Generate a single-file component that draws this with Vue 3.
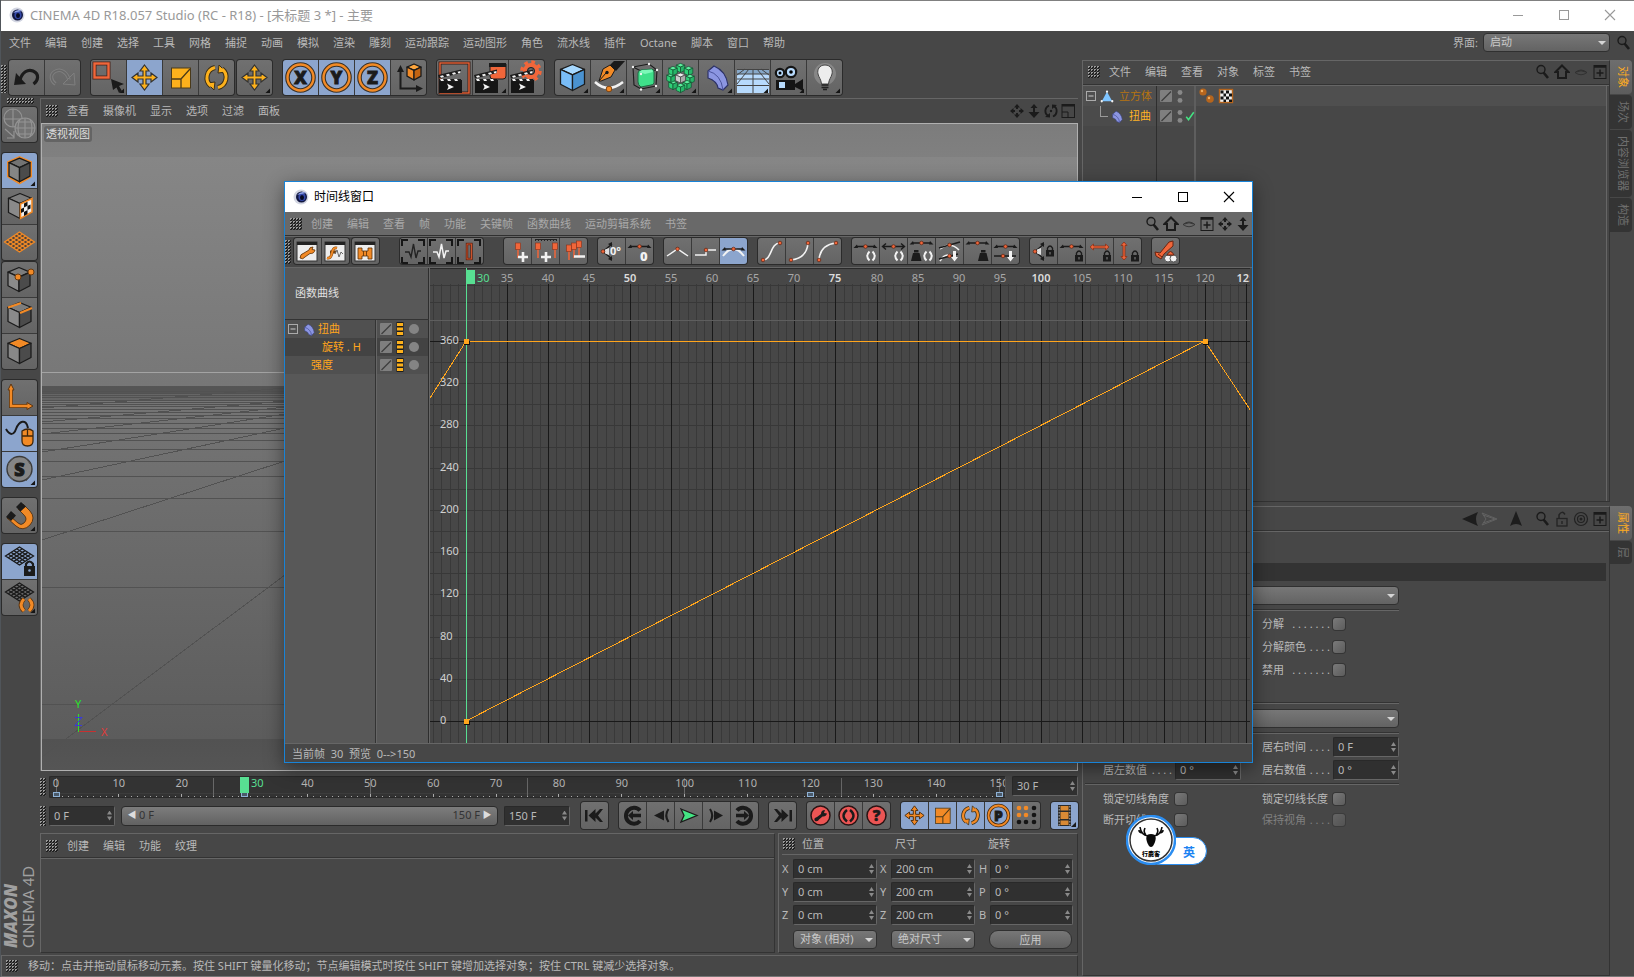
<script setup>
import { h, ref } from 'vue'

const K = '#1b1b1b'
const O = '#f28a26'
const Y = '#fdb11c'
const R = '#f0663a'
const W = '#f2f2f2'

const cube = (cx, cy, w, hh, top, left, right, stroke = K, sw = 1.3) => {
  const a = cy - hh * 0.62
  const b = cy + hh * 0.52
  const m = cy - hh * 0.2
  return `<g stroke="${stroke}" stroke-width="${sw}" stroke-linejoin="round"><path d="M${cx} ${cy - hh}L${cx + w} ${a}L${cx} ${m}L${cx - w} ${a}Z" fill="${top}"/><path d="M${cx - w} ${a}L${cx} ${m}V${cy + hh}L${cx - w} ${b}Z" fill="${left}"/><path d="M${cx + w} ${a}L${cx} ${m}V${cy + hh}L${cx + w} ${b}Z" fill="${right}"/></g>`
}
const more = '<path d="M33 28.500V33H28.500Z" fill="#151515"/>'
const cross = (c, s) =>
  `<path d="M17.500 5L22 11H19V16H24V13L30 17.500L24 22V19H19V24H22L17.500 30L13 24H16V19H11V22L5 17.500L11 13V16H16V11H13Z" fill="${c}" stroke="${s}" stroke-width="1.200"/>`
const scaleBox = (c) =>
  `<rect x="8.500" y="8" width="19" height="20" fill="${c}" stroke="#4a3a1a"/><path d="M8.500 19H18V28M18 19L27 9" fill="none" stroke="#4a3a1a" stroke-width="1.300"/>`
const spin = (c) =>
  `<g fill="none" stroke="#3b2f18" stroke-width="5"><path d="M16 7.500A10.500 10.500 0 0 0 12 26"/><path d="M19 27.500A10.500 10.500 0 0 0 23 9"/></g><path d="M8 23L16 22L15 30ZM27 12L19 13L20 5Z" fill="${c}" stroke="#3b2f18"/><g fill="none" stroke="${c}" stroke-width="3"><path d="M16 7.500A10.500 10.500 0 0 0 12 26"/><path d="M19 27.500A10.500 10.500 0 0 0 23 9"/></g>`
const axis = (t) =>
  `<circle cx="17.500" cy="17.500" r="13" fill="none" stroke="#3b3126" stroke-width="4.600"/><circle cx="17.500" cy="17.500" r="13" fill="none" stroke="${O}" stroke-width="2.400"/><text x="17.500" y="24" text-anchor="middle" font-family="Open Sans, Noto Sans, sans-serif" font-weight="800" font-size="18" fill="${K}" stroke="${K}" stroke-width=".8">${t}</text>`
const clap = `<path d="M2 20H25V33H2Z" fill="#161616"/><path d="M1 15L24 9.500V13L2 18.500ZM2 19H24V21.500H2Z" fill="${K}"/><path d="M3 16l3-.7 1 1.800-3 .7zM9 14.500l3-.7 1 1.800-3 .7zM15 13l3-.7 1 1.800-3 .7zM20.500 11.700l3-.7 0 2-2 .4zM3 19h3l1 2H4zM10 19h3l1 2h-3zM17 19h3l1 2h-3z" fill="${W}"/><path d="M10 23.500L17 27L10 30L11.500 27Z" fill="${W}"/>`
const gridDiamond = (c, cy = 17, hh = 10, w = 15, sw = 1.3) => {
  let s = `<path d="M17.500 ${cy - hh}L${17.5 + w} ${cy}L17.500 ${cy + hh}L${17.5 - w} ${cy}Z"/>`
  for (let i = 1; i < 5; i++) {
    const t = i / 5
    s += `<path d="M${17.5 - w * t} ${cy - hh + hh * t}L${17.5 + w - w * t} ${cy + hh * t}M${17.5 + w * t} ${cy - hh + hh * t}L${17.5 - w + w * t} ${cy + hh * t}"/>`
  }
  return `<g fill="none" stroke="${c}" stroke-width="${sw}">${s}</g>`
}
const grey = ['#7d7d7d', '#8a8a8a', '#4b4b4b']

const big = {
  undo: `<path d="M11 20C13 12 19 9 24 11C31 14 29 21 24.500 24" fill="none" stroke="${K}" stroke-width="3.200"/><path d="M5 25L7 13L17 24Z" fill="${K}"/>`,
  redo: `<g fill="none" stroke="#7f7f7f"><path d="M24 20C22 12 16 9 11 11C4 14 6 21 10.500 24" stroke-width="3.500"/><path d="M24 20C22 12 16 9 11 11C4 14 6 21 10.500 24" stroke="#686868" stroke-width="1.500"/><path d="M30 25L29 13L18 24Z"/></g>`,
  select: `<rect x="3.500" y="3.500" width="14" height="14" fill="none" stroke="#4a241a" stroke-width="4"/><rect x="3.500" y="3.500" width="14" height="14" fill="none" stroke="${R}" stroke-width="2.400"/><path d="M20 19L33 24L28 26L31 31L28 33L25.500 27.500L22 30Z" fill="${K}"/>${more}`,
  move: cross(Y, '#333'), moveMore: cross(Y, '#333') + more, scale: scaleBox(Y), rotate: spin(Y),
  x: axis('X'), y: axis('Y'), z: axis('Z'),
  world: `<path d="M9.500 10V28.500H27" fill="none" stroke="${K}" stroke-width="2"/><path d="M9.500 5L13 12H6ZM32 28.500L25 25V32Z" fill="${K}"/>${cube(23, 12, 7, 8, '#ffa63d', O, '#c26312')}`,
  render: `<rect x="3" y="3" width="29" height="30" fill="none" stroke="#3b1d14" stroke-width="3"/><rect x="3" y="3" width="29" height="30" fill="none" stroke="${R}" stroke-width="1.300"/>${clap}`,
  renderTo: `<path d="M17 4H33V16Q33 19 30 19H20Q17 19 17 16Z" fill="${R}" stroke="${K}"/><path d="M16 3H33V7H16Z" fill="${K}"/>${clap}${more}`,
  renderSet: `<circle cx="22" cy="11" r="9" fill="none" stroke="${R}" stroke-width="3.500" stroke-dasharray="3.600 3.470"/><circle cx="22" cy="11" r="6" fill="none" stroke="${R}" stroke-width="4"/><circle cx="22" cy="11" r="3.500" fill="#6a6a6a" stroke="${K}"/>${clap}`,
  prim: cube(17.5, 17.5, 12, 13, '#a6d8ff', '#79bdf8', '#4a92d0') + more,
  pen: `<path d="M8 21L12 9L19 5L24 10L20 17L10 21Z" fill="${O}" stroke="${K}"/><path d="M19 5L23 1H34L25 11Z" fill="${K}"/><path d="M8 21L15 13" stroke="${K}"/><circle cx="16" cy="12.500" r="1.700" fill="${K}"/><path d="M4 22Q17 34 32 22" fill="none" stroke="${W}" stroke-width="2.400"/><circle cx="18" cy="29" r="2.800" fill="${O}" stroke="#7b4312"/>${more}`,
  subdiv: `<g fill="none" stroke="${K}" stroke-width="1.100"><path d="M6 7L22 4L30 10L29 26L14 29L7 25ZM6 7L14 11L30 10M14 11V29"/></g><path d="M11 13Q11 11 14 10L25 9Q27 10 27 12V23Q26 25 24 25L14 27Q11 25 11 22Z" fill="#3fe08a" stroke="#1c6e44"/><path d="M12 12L15 10L25 9.500L26 12L18 14Z" fill="#7cf8b8"/><g fill="${W}"><circle cx="6" cy="7" r="1.200"/><circle cx="22" cy="4" r="1.200"/><circle cx="30" cy="10" r="1.200"/><circle cx="14" cy="14" r="1.200"/><circle cx="29" cy="26" r="1.200"/><circle cx="14" cy="29.500" r="1.200"/></g>${more}`,
  array: [[17.5, 8], [25.5, 11], [27, 19], [24, 25], [17.5, 28], [10, 25], [8, 18], [10, 11]].map(([a, b]) => cube(a, b, 4.3, 4.6, '#5ff0a0', '#2fd077', '#27b568', '#134f2f', 0.7)).join('') + cube(17.5, 18, 5, 5, '#f0f0f0', '#ccc', '#aaa', '#444', 0.7) + more,
  bend: `<path d="M9 11L15 6Q27 11 29 25L24 30L19 28Q18 21 9 18Z" fill="#8c96e2" stroke="#2d3266" stroke-width="1.200"/><path d="M9 11Q22 14 24 30M15 6" fill="none" stroke="#4b539c"/>${more}`,
  floor: `<path d="M2 9H34V33H2Z" fill="#b7dafc"/><path d="M2 9H34V14H2Z" fill="#87a8c8"/><g stroke="#444" stroke-width="1" fill="none"><path d="M2 9.500H34M2 14H34M2 19H34M2 25.500H34M18 9V33M14 9L2 24M22 9L34 24M10 9L2 15M26 9L34 15"/></g>${more}`,
  camera: `<path d="M5 20H24V30H5ZM24 24L32 19V31L24 27Z" fill="#151515"/><circle cx="9" cy="13" r="4.200" fill="#b7dafc" stroke="#151515" stroke-width="2.200"/><circle cx="20" cy="12" r="5.200" fill="#b7dafc" stroke="#151515" stroke-width="2.200"/><circle cx="9" cy="13" r="1.500"/><circle cx="20" cy="12" r="1.800"/><rect x="8" y="22" width="6" height="6" fill="#b7dafc"/>${more}`,
  bulb: `<circle cx="18" cy="14" r="11" fill="#a9a9a9" opacity=".45"/><path d="M18 5C12 5 10 10 11 14C12 18 14 19 14.500 24H21.500C22 19 24 18 25 14C26 10 24 5 18 5Z" fill="#ededed" stroke="#444"/><path d="M14.500 25H21.500M14.500 27.500H21.500M16 29.500H20" stroke="#222" stroke-width="1.700"/>${more}`,
  convert: `<g fill="none" stroke="#939393" stroke-width="1.200"><circle cx="11" cy="11" r="9"/><path d="M2 12H20M11 2V20"/><circle cx="23" cy="21" r="10" fill="#747474"/><path d="M13 21H33M15 15H31M15 27H31M23 11V31M18 12Q14 21 18 30M28 12Q32 21 28 30"/><path d="M3 22L12 30M12 24V31H5"/></g>`,
  model: `<path d="M17.500 3L30 8.500V24L17.500 31.500L5 24V8.500Z" fill="${O}"/>` + cube(17.5, 17, 10.5, 11.8, '#737373', '#858585', '#4b4b4b') + more,
  texture: cube(18, 17, 11.5, 12.5, ...grey) + `<path d="M18.500 15L30 9.500V23L18.500 29.500Z" fill="#f0f0f0" stroke="${O}" stroke-width="1.600"/><path d="M22 14.500l3.500-1.700v4l-3.500 1.700zM19 20l3-1.500v4l-3 1.600zM25.500 17l3-1.500v4l-3 1.600zM22 23l3.500-1.900v4L22 27z" fill="#111"/>`,
  plane: `<path d="M17.500 7L32.500 17L17.500 27L2.500 17Z" fill="#51443a"/>` + gridDiamond(O),
  points: cube(17, 17.5, 11, 12, ...grey) + `<circle cx="16" cy="15" r="3" fill="${O}" stroke="#6b3b10"/><circle cx="29" cy="10" r="3" fill="${O}" stroke="#6b3b10"/>`,
  edges: cube(17.5, 17, 11.5, 12.5, ...grey) + `<path d="M6 9.500L19 5M18 15L30 10" stroke="${O}" stroke-width="2.200"/>`,
  polys: cube(17.5, 17, 11.5, 12.5, O, '#888', '#4b4b4b'),
  axisMode: `<path d="M9 8V26H27" fill="none" stroke="#5b3511" stroke-width="4"/><path d="M9 4L12 10H6ZM31 26L25 22.500V29.500Z" fill="${O}" stroke="#5b3511"/><path d="M9 8V26H27" fill="none" stroke="${O}" stroke-width="2.400"/>`,
  tweak: `<path d="M4 13C8 20 12 19 14 13C17 5 24 2 26 12" fill="none" stroke="${K}" stroke-width="2"/><path d="M20 15Q26 11 31 15V25Q31 30 25.500 30Q20 30 20 25Z" fill="${O}" stroke="#40270c" stroke-width="1.300"/><path d="M20 20H31M25.500 13V20" stroke="#40270c" stroke-width="1.300"/>`,
  snapS: `<circle cx="17.500" cy="17" r="12.500" fill="#858585" stroke="#3a3a3a" stroke-width="1.400"/><path d="M6 12L12 5M28 12L24 6M7 24L12 29M29 23L24 29" stroke="#555"/><text x="17.500" y="23.500" text-anchor="middle" font-family="Open Sans, sans-serif" font-weight="800" font-size="18" fill="${K}" stroke="${K}">S</text>${more}`,
  magnet: `<path d="M9 19L16 25Q19 28 22 25Q26 21 22 17L16 11L21 6L28 13Q34 20 28 27Q21 34 14 28L5 20Z" fill="${O}" stroke="#4a2a0b" stroke-width=".8"/><path d="M4 19L9 13L14 17.500L9 23ZM14 9L19 4L24 8.500L18.500 13.500Z" fill="${K}"/>${more}`,
  gridLock: gridDiamond(K, 12, 9, 14) + `<path d="M22 22H33V32H22Z" fill="${K}"/><path d="M24 23V20Q27.500 15 31 20V23" fill="none" stroke="${K}" stroke-width="2.200"/><circle cx="27.500" cy="26.500" r="1.300" fill="#8ca5cd"/>`,
  gridSpin: gridDiamond(K, 12, 9, 14) + `<path d="M22 19Q16 25 22 31M27 19Q33 25 27 31" fill="none" stroke="#5b3511" stroke-width="4.500"/><path d="M22 19Q16 25 22 31M27 19Q33 25 27 31" fill="none" stroke="${O}" stroke-width="3"/>${more}`
}

const dot = (x, y, r = 1.8) => `<circle cx="${x}" cy="${y}" r="${r}" fill="${R}" stroke="#5d2413" stroke-width=".7"/>`
const handle = (y) => `<path d="M4 ${y}H23" stroke="${K}" stroke-width="1.400"/><path d="M1.500 ${y + 1.5}L5 ${y - 2}L6 ${y + 1.5}ZM25.500 ${y + 1.5}L22 ${y - 2}L21 ${y + 1.5}Z" fill="${K}"/>${dot(13.5, y)}`
const paren = (x) => `<path d="M${x - 1.5} 13.500Q${x - 6} 18 ${x - 1.5} 22.500M${x + 1.5} 13.500Q${x + 6} 18 ${x + 1.5} 22.500" fill="none" stroke="${W}" stroke-width="2"/>`
const lock = (x, y) => `<rect x="${x}" y="${y}" width="8" height="6.500" fill="${K}"/><path d="M${x + 1.5} ${y}V${y - 2}Q${x + 4} ${y - 6} ${x + 6.5} ${y - 2}V${y}" fill="none" stroke="${K}" stroke-width="1.400"/><rect x="${x + 3.5}" y="${y + 2}" width="1" height="2.500" fill="#888"/>`
const winBox = `<rect x="3" y="4" width="20" height="19" fill="#ededed" stroke="#333"/><rect x="3" y="4" width="20" height="3" fill="#222"/>`
const brackets = `<path d="M2 8V2H8M18 2H24V8M24 19V25H18M8 25H2V19" fill="none" stroke="#161616" stroke-width="2"/>`
const pin = (x, y = 5) => `<path d="M${x} ${y + 5}V${y + 15}" stroke="${R}" stroke-width="1.500"/><rect x="${x - 2.5}" y="${y}" width="5" height="6.500" fill="${R}" stroke="#8a3018" stroke-width=".6"/>`
const weight = (x) => `<path d="M${x} 23L${x + 2} 15H${x + 8.5}L${x + 10.5} 23ZM${x + 3} 12H${x + 7.5}V14.500H${x + 3}Z" fill="${K}"/>`
const arrowDown = `<path d="M17 13H20V19H22L18.500 23.500L15 19H17Z" fill="${W}"/>`

const small = {
  tKey: winBox + `<path d="M6 20Q6 16 10 15L15 12Q15 9 19 9L18 11.500L21 12Q20 16 16 15.500L11 19Q9 22 6 20Z" fill="${O}" stroke="#5a3008" stroke-width=".8"/>`,
  tCurve: winBox + `<path d="M5 20Q9 21 10 15Q11 9 15 10M8 14H14" fill="none" stroke="#7a430c" stroke-width="2.800"/><path d="M5 20Q9 21 10 15Q11 9 15 10" fill="none" stroke="${O}" stroke-width="1.800"/><path d="M13 16L15 12L17 19L19 14L21 16" fill="none" stroke="#666"/>`,
  tMotion: winBox + `<path d="M6 10H10V13H16V10H20V21H16V18H10V21H6Z" fill="${O}" stroke="#5a3008" stroke-width=".8"/><path d="M11.500 13V18M14.500 13V18" stroke="#5a3008" stroke-width=".8"/>`,
  pulseK: brackets + `<path d="M5 14H9L11 19L13.500 6L16 20L18 13H21" fill="none" stroke="#222" stroke-width="1.400"/>`,
  pulseW: brackets + `<path d="M5 14H9L11 19L13.500 6L16 20L18 13H21" fill="none" stroke="${W}" stroke-width="1.500"/>`,
  frameO: brackets + `<rect x="11" y="6" width="4.500" height="15" fill="none" stroke="#5c2010" stroke-width="2.400"/><rect x="11" y="6" width="4.500" height="15" fill="none" stroke="#d9592f" stroke-width=".9"/>`,
  addKey: pin(14) + `<path d="M19 14V24M14 19H24" stroke="${W}" stroke-width="2.600"/>`,
  addKeys: pin(6) + pin(23) + `<path d="M3 2H25" stroke="#222" stroke-width="2" stroke-dasharray="1 2"/><path d="M3 1.500H25" stroke="#222"/><path d="M14 14V24M9 19H19" stroke="${W}" stroke-width="2.600"/>`,
  delKeys: pin(9, 7) + pin(14, 5) + pin(19, 3) + `<path d="M14 18.500H25" stroke="${W}" stroke-width="2.600"/>`,
  zeroAngle: `<path d="M5 13.500L14 6M5 13.500L14 21" stroke="${K}" stroke-width="1.300"/><path d="M14 4V9L10 6ZM14 23V18L10 21Z" fill="${K}"/><path d="M7 11.500L11 10V17L7 15.500Z" fill="#ddd"/>${dot(5, 13.5)}<text x="12" y="17" font-family="Open Sans, sans-serif" font-weight="700" font-size="11" fill="${W}">0°</text>`,
  zeroLen: handle(8.5) + `<text x="14" y="23" font-family="Open Sans, sans-serif" font-weight="800" font-size="13" fill="${W}">0</text>`,
  linear: `<path d="M3 18L13.500 11L24 18" fill="none" stroke="${W}" stroke-width="1.500"/>${dot(13.5, 11)}`,
  step: `<path d="M3 17H14V12H24" fill="none" stroke="${W}" stroke-width="1.500"/>${dot(14, 12)}`,
  spline: `<path d="M3 18Q13.500 4 24 18" fill="none" stroke="${W}" stroke-width="2"/>${handle(11)}`,
  easeS: `<path d="M5 22C14 22 12 5 22 5" fill="none" stroke="${W}" stroke-width="1.600"/>${dot(5, 22)}${dot(22, 5)}`,
  easeIn: `<path d="M5 22Q21 20 22 5" fill="none" stroke="${W}" stroke-width="1.600"/>${dot(5, 22)}${dot(22, 5)}`,
  easeOut: `<path d="M5 22Q6 7 22 5" fill="none" stroke="${W}" stroke-width="1.600"/>${dot(5, 22)}${dot(22, 5)}`,
  hParen: handle(8.5) + paren(19),
  aParen: `<path d="M3 8.500H24M6 5.500L2.500 8.500L6 11.500M21 5.500L24.500 8.500L21 11.500" fill="none" stroke="${K}" stroke-width="1.400"/>${dot(13.5, 8.5)}${paren(19)}`,
  wParen: handle(5) + weight(3) + paren(20),
  curves: `<path d="M4 11Q14 3 23 12M4 23Q9 15 15 18" fill="none" stroke="${W}" stroke-width="1.600"/><path d="M3 10L24 4M3 21L22 16" stroke="${K}" stroke-width="1.400"/>${dot(13.5, 7)}${dot(13.5, 18)}${arrowDown}`,
  wHandle: handle(5) + weight(14),
  twoHandle: handle(8.5) + `<path d="M2 18H24" stroke="${K}" stroke-width="1.400"/>${dot(11, 18)}${arrowDown}`,
  lockAngle: `<path d="M5 13.500L14 6M5 13.500L14 21" stroke="${K}" stroke-width="1.300"/><path d="M14 4V9L10 6ZM14 23V18L10 21Z" fill="${K}"/><path d="M7 11.500L11 10V17L7 15.500Z" fill="#ddd"/>${dot(5, 13.5)}${lock(16, 12)}`,
  lockLen: handle(8.5) + lock(17, 17),
  lockTime: `<path d="M4 9L7.500 6V8H19.500V6L23 9L19.500 12V10H7.500V12Z" fill="${R}" stroke="#8a3018" stroke-width=".8"/>${lock(17, 17)}`,
  lockVal: `<path d="M10 4L13 7.500H11V18.500H13L10 22L7 18.500H9V7.500H7Z" fill="${R}" stroke="#8a3018" stroke-width=".8"/>${lock(17, 17)}`,
  keyMix: `<path d="M3 14L8 15L17 4L21 3L21 8L12 16L9 21L4 18Z" fill="${R}" stroke="#6b2511"/><path d="M6 16L10 19" stroke="#6b2511"/><circle cx="16" cy="20.500" r="3.500" fill="${W}" stroke="#555"/><circle cx="21.500" cy="20.500" r="3.500" fill="${W}" stroke="#555"/><path d="M15 17Q18.500 10 22 17Z" fill="${R}" stroke="#6b2511"/>`,
  first: `<path d="M4 8H6.500V19.500H4ZM14.500 7L7.500 13.500L14.500 20V15.500L12.500 13.500L14.500 11.500ZM22 7H19L12.500 13.500L19 20H22L17 13.500Z" fill="${K}"/>`,
  last: `<path d="M23 8H20.500V19.500H23ZM12.500 7L19.500 13.500L12.500 20V15.500L14.500 13.500L12.500 11.500ZM5 7H8L14.500 13.500L8 20H5L10 13.500Z" fill="${K}"/>`,
  prevKey: `<path d="M21 8.500A8 8 0 1 0 21 19" fill="none" stroke="${K}" stroke-width="4"/><path d="M9 13.500L14 9V11.800H22V15.200H14V18Z" fill="${K}"/>`,
  nextKey: `<path d="M6 8.500A8 8 0 1 1 6 19" fill="none" stroke="${K}" stroke-width="4"/><path d="M18 13.500L13 9V11.800H5V15.200H13V18Z" fill="${K}"/>`,
  prev: `<path d="M7 13.500L17 8.500V18.500Z" fill="${K}"/><path d="M21.500 7Q17 13.500 21.500 20" fill="none" stroke="${K}" stroke-width="2"/>`,
  play: `<path d="M6 7L22 13.500L6 20L9 13.500Z" fill="#43e583" stroke="#1b1b1b" stroke-width="1.300"/>`,
  nextFrame: `<path d="M20 13.500L11 8.500V18.500Z" fill="${K}"/><path d="M7 7Q11.500 13.500 7 20" fill="none" stroke="${K}" stroke-width="2"/>`,
  recKey: `<circle cx="13.500" cy="13.500" r="9.500" fill="#ec5554" stroke="#2a1414" stroke-width="1.500"/><path d="M8 19Q6 16 10 15L14 12Q14 8 18 8L17 11L20 11.500Q19 15 15.500 14.500L12 17.500Q11 20 8 19Z" fill="${K}"/>`,
  recAuto: `<circle cx="13.500" cy="13.500" r="9.500" fill="#ec5554" stroke="#2a1414" stroke-width="1.500"/><path d="M12 8Q5 13.500 12 19.500M15 8Q22 13.500 15 19.500" fill="none" stroke="${K}" stroke-width="2.400"/>`,
  recHelp: `<circle cx="13.500" cy="13.500" r="9.500" fill="#ec5554" stroke="#2a1414" stroke-width="1.500"/><text x="13.500" y="19" text-anchor="middle" font-family="Open Sans, sans-serif" font-weight="800" font-size="15" fill="${K}" stroke="${K}" stroke-width=".5">?</text>`,
  sMove: `<g transform="scale(.77)">${cross(O, '#4a2a0b')}</g>`,
  sScale: `<g transform="scale(.77)">${scaleBox(O)}</g>`,
  sRot: `<g transform="scale(.77)">${spin(O)}</g>`,
  sParam: `<circle cx="13.500" cy="13.500" r="10" fill="none" stroke="#4a2a0b" stroke-width="3.400"/><circle cx="13.500" cy="13.500" r="10" fill="none" stroke="${O}" stroke-width="1.800"/><text x="13.500" y="18.500" text-anchor="middle" font-family="Open Sans, sans-serif" font-weight="800" font-size="14" fill="${K}" stroke="${K}" stroke-width=".8">P</text>`,
  sPla: [6, 13, 20].map((y, j) => [6, 13, 21].map((x, i) => `<circle cx="${x}" cy="${y}" r="2.300" fill="${i < 2 && j < 2 ? O : '#151515'}"/>`).join('')).join(''),
  film: `<rect x="7" y="3" width="13" height="21" fill="#2b2b2b"/><path d="M9.500 4H17.500V8.500H9.500ZM9.500 10H17.500V17H9.500ZM9.500 18.500H17.500V23H9.500Z" fill="#d98a35"/><path d="M8.200 4V24M18.800 4V24" stroke="#9a9a9a" stroke-width="1.200" stroke-dasharray="1.500 1.500"/><path d="M25 20V25H20Z" fill="${K}"/>`
}

const tiny = {
  search: `<circle cx="6" cy="5.500" r="4" fill="none" stroke="${K}" stroke-width="1.400"/><path d="M8.500 8.500L13 14" stroke="${K}" stroke-width="2.600"/>`,
  home: `<path d="M8 1.500L14.500 8H12V14H4V8H1.500Z" fill="none" stroke="${K}" stroke-width="2"/>`,
  eye: `<path d="M2 8.500Q8 3.500 14 8.500Q8 13 2 8.500ZM3.500 8Q8 5.500 12.500 8" fill="none" stroke="#2c2c2c" stroke-width=".8"/>`,
  plus: `<rect x="2" y="1.500" width="12" height="13" fill="none" stroke="${K}" stroke-width="1"/><path d="M2 2.500H14" stroke="${K}" stroke-width="2.500"/><path d="M8 5.500V12.500M4.500 9H11.500" stroke="${K}" stroke-width="1.500"/>`,
  pan: `<path d="M8 1L11 4.500H9V6H7V4.500H5ZM8 15L5 11.500H7V10H9V11.500H11ZM1 8L4.500 5V7H6V9H4.500V11ZM15 8L11.500 11V9H10V7H11.500V5Z" fill="${K}"/>`,
  dolly: `<path d="M8 1L11.500 5H9V9H13.500L8 15L2.500 9H7V5H4.500Z" fill="${K}"/>`,
  orbit: `<path d="M6 2.500A6 6 0 0 0 5 13M10 13.500A6 6 0 0 0 11 3" fill="none" stroke="${K}" stroke-width="1.800"/><path d="M2 14L7 14.500V10ZM14 2L9 1.500V6Z" fill="${K}"/><circle cx="8" cy="8" r="1.200" fill="${K}"/>`,
  layout: `<rect x="2" y="1.500" width="12.500" height="13" fill="none" stroke="${K}" stroke-width="1"/><path d="M2 2.500H14.500" stroke="${K}" stroke-width="2"/><path d="M2 9H8V14.500" fill="none" stroke="${K}"/>`,
  back: `<path d="M0 8L16 1Q12 8 16 15Z" fill="#1d1d1d"/>`,
  fwd: `<path d="M16 8L1 2L5 8L1 14ZM2 4L14 8L2 12" fill="none" stroke="#626262"/>`,
  up: `<path d="M8 0L14 15Q8 11 2 15Z" fill="#1d1d1d"/>`,
  unlock: `<rect x="3" y="7.500" width="10" height="7.500" fill="none" stroke="#242424" stroke-width="1.300"/><path d="M5 7V4Q8-1 11 3.500" fill="none" stroke="#242424" stroke-width="1.500"/><path d="M8 10V13" stroke="#242424" stroke-width="1.400"/>`,
  target: `<circle cx="8" cy="8" r="6.500" fill="none" stroke="#222" stroke-width="1.200"/><circle cx="8" cy="8" r="3.500" fill="none" stroke="#222" stroke-width="1.200"/><circle cx="8" cy="8" r="1.500" fill="#222"/>`,
  bendS: `<path d="M3 6L7 2.500Q13 5 14 12L11 15.500L8 14.500Q7 11 3 10Z" fill="#8c96e2" stroke="#3c4380" stroke-width=".7"/><path d="M3 6Q10 8 11 15.500" fill="none" stroke="#525aa6"/>`,
  layer: `<rect x="2" y="2" width="12" height="12" rx="1" fill="#7f7f7f"/><path d="M3.500 13L13 3.500" stroke="#3e3e3e" stroke-width="1.300"/>`,
  solo: `<rect x="4.500" y="1" width="7" height="14" fill="#1d1d1d"/><path d="M5 3.500H11M5 8H11M5 12.500H11" stroke="${Y}" stroke-width="2.800"/>`,
  circle: `<circle cx="8" cy="8" r="5" fill="#848484"/>`,
  minus: `<rect x="3.500" y="3.500" width="9" height="9" fill="none" stroke="#aaa"/><path d="M5.500 8H10.500" stroke="#ccc"/>`,
  poly: `<path d="M8 3L14 14H2Z" fill="#7ec4ff"/><g fill="${W}"><circle cx="8" cy="3" r="1.300"/><circle cx="2" cy="14" r="1.300"/><circle cx="14" cy="14" r="1.300"/></g>`,
  dots: `<circle cx="8" cy="4" r="2.800" fill="#888"/><circle cx="8" cy="13" r="2.800" fill="#888"/>`,
  check: `<path d="M3 9L6 13L13 3" fill="none" stroke="#43e583" stroke-width="2"/>`,
  phong: `<circle cx="5" cy="4" r="3.600" fill="#b5651d"/><circle cx="4" cy="3" r="1.200" fill="#f2b060"/><circle cx="12" cy="11" r="3.800" fill="#b5651d"/><circle cx="11" cy="10" r="1.200" fill="#f2b060"/>`,
  uvw: `<rect x="1.500" y="1.500" width="13" height="13" fill="#eee" stroke="#b5651d" stroke-width="1.400"/><path d="M2.500 2.500h3v3h-3zM8 2.500h3v3H8zM5.500 5.500H8v3H5.500zM11 5.500h3v3h-3zM2.500 8.500h3v3h-3zM8 8.500h3v3H8zM5.500 11.500H8v2.500H5.500zM11 11.500h3v2.500h-3z" fill="#111"/>`,
  logo: `<circle cx="8" cy="8" r="7.500" fill="#d3d6e2"/><circle cx="8.500" cy="8" r="5.500" fill="#10163f"/><ellipse cx="9" cy="8" rx="3.600" ry="4" fill="#3448a8"/><ellipse cx="9" cy="8.500" rx="2" ry="2.600" fill="#070a22"/><path d="M4 6Q8 1 13.500 4L8 5Z" fill="#8fa2e6"/>`,
  min: `<path d="M3 8.500H13" stroke="currentColor"/>`,
  max: `<rect x="3.500" y="3.500" width="9" height="9" fill="none" stroke="currentColor"/>`,
  close: `<path d="M3 3L13 13M13 3L3 13" stroke="currentColor" stroke-width="1.100"/>`
}

const Icon = ({ n, s = 16 }) => {
  const src = big[n] ? [big[n], 35] : small[n] ? [small[n], 27] : [tiny[n], 16]
  const size = src[1] === 16 ? s : src[1]
  return h('svg', { viewBox: `0 0 ${src[1]} ${src[1]}`, width: size, height: size, 'aria-hidden': 'true', innerHTML: src[0] })
}
Icon.props = ['n', 's']

const menus = ['文件', '编辑', '创建', '选择', '工具', '网格', '捕捉', '动画', '模拟', '渲染', '雕刻', '运动跟踪', '运动图形', '角色', '流水线', '插件', 'Octane', '脚本', '窗口', '帮助']
const viewMenus = ['查看', '摄像机', '显示', '选项', '过滤', '面板']
const objMenus = ['文件', '编辑', '查看', '对象', '标签', '书签']
const tlMenus = ['创建', '编辑', '查看', '帧', '功能', '关键帧', '函数曲线', '运动剪辑系统', '书签']
const matMenus = ['创建', '编辑', '功能', '纹理']

const toolGroups = [
  { items: ['undo', 'redo'] },
  { items: ['select', 'move', 'scale', 'rotate'], on: ['move'] },
  { items: ['moveMore'], near: true },
  { items: ['x', 'y', 'z', 'world'], on: ['x', 'y', 'z'] },
  { items: ['render', 'renderTo', 'renderSet'] },
  { items: ['prim', 'pen', 'subdiv', 'array', 'bend', 'floor', 'camera', 'bulb'] }
]
const sideGroups = [
  { items: ['convert'] },
  { items: ['model', 'texture', 'plane'], on: ['model'] },
  { items: ['points', 'edges', 'polys'], near: true },
  { items: ['axisMode', 'tweak', 'snapS'], on: ['tweak', 'snapS'] },
  { items: ['magnet'] },
  { items: ['gridLock', 'gridSpin'], on: ['gridLock'] }
]
const tlGroups = [
  { items: ['tKey', 'tCurve'] },
  { items: ['tMotion'], gap: 'near' },
  { items: ['pulseK', 'pulseW', 'frameO'], gap: 'far' },
  { items: ['addKey', 'addKeys', 'delKeys'], gap: 'far' },
  { items: ['zeroAngle', 'zeroLen'] },
  { items: ['linear', 'step', 'spline'], on: ['spline'] },
  { items: ['easeS', 'easeIn', 'easeOut'] },
  { items: ['hParen', 'aParen', 'wParen', 'curves', 'wHandle', 'twoHandle'] },
  { items: ['lockAngle', 'lockLen', 'lockTime', 'lockVal'] },
  { items: ['keyMix'] }
]
const playGroups = [
  { items: ['first'] },
  { items: ['prevKey', 'prev', 'play', 'nextFrame', 'nextKey'] },
  { items: ['last'] },
  { items: ['recKey', 'recAuto', 'recHelp'] },
  { items: ['sMove', 'sScale', 'sRot', 'sParam', 'sPla'], on: ['sMove', 'sScale', 'sRot', 'sParam'] },
  { items: ['film'], on: ['film'] }
]

const frames = Array.from({ length: 151 }, (_, i) => i)
const pct = (f) => (f / 150) * 100 + '%'

const gx = (f) => 36 + Math.round((f - 30) * 8.21)
const gy = (v) => 453 - Math.round(v * 1.0555)
const gFrames = Array.from({ length: 100 }, (_, i) => i + 26)
const gLabels = gFrames.filter((f) => f % 5 === 0 && f > 30)
const gValues = Array.from({ length: 19 }, (_, i) => i * 20)
const keys = [[30, 360], [120, 360], [30, 0]]

const horizon = [267, 269, 271, 273, 276, 278, 280, 282, 285, 288, 291, 294, 299, 304, 309, 316, 325, 337, 352, 374, 407, 463, 580]
const coords = ref([
  [['X', '0 cm'], ['X', '200 cm'], ['H', '0 °']],
  [['Y', '0 cm'], ['Y', '200 cm'], ['P', '0 °']],
  [['Z', '0 cm'], ['Z', '200 cm'], ['B', '0 °']]
])
const start = ref('0 F')
const end = ref('150 F')
const now = ref('30 F')
const rt = ref('0 F')
const lv = ref('0 °')
const rv = ref('0 °')
const dots4 = '. . . .'
const dots7 = '. . . . . . .'
const checks = [
  { label: '分解', dots: dots7 },
  { label: '分解颜色', dots: dots4 },
  { label: '禁用', dots: dots7 }
]
const tracks = [
  { name: '扭曲', cls: 'root' },
  { name: '旋转 . H', cls: 'sub' },
  { name: '强度', cls: 'leaf' }
]
</script>

<template>
  <div class="app">
    <header class="titlebar">
      <Icon n="logo" />
      <h1>CINEMA 4D R18.057 Studio (RC - R18) - [未标题 3 *] - 主要</h1>
      <div class="winbtns">
        <button v-for="b in ['min', 'max', 'close']" :key="b" :aria-label="b"><Icon :n="b" /></button>
      </div>
    </header>

    <nav class="menubar">
      <button v-for="m in menus" :key="m">{{ m }}</button>
      <label class="iface" for="iface">界面:</label>
      <span class="select iface-sel"><select id="iface"><option>启动</option></select></span>
      <Icon n="search" />
    </nav>

    <div class="main">
      <div class="left">
        <div class="toolbar">
          <i class="grip tall"></i>
          <div v-for="(g, i) in toolGroups" :key="i" class="group" :class="{ near: g.near }">
            <button v-for="t in g.items" :key="t" class="tile" :class="{ on: g.on && g.on.includes(t) }" :aria-label="t"><Icon :n="t" /></button>
          </div>
        </div>

        <div class="work">
          <aside class="side">
            <i class="grip wide"></i>
            <div v-for="(g, i) in sideGroups" :key="i" class="group col" :class="{ near: g.near }">
              <button v-for="t in g.items" :key="t" class="tile" :class="{ on: g.on && g.on.includes(t) }" :aria-label="t"><Icon :n="t" /></button>
            </div>
            <div class="brand"><b>MAXON</b><span>CINEMA 4D</span></div>
          </aside>

          <div class="center">
            <section class="view">
              <div class="phead">
                <i class="grip"></i>
                <button v-for="m in viewMenus" :key="m">{{ m }}</button>
                <div class="icons"><Icon n="pan" /><Icon n="dolly" /><Icon n="orbit" /><Icon n="layout" /></div>
              </div>
              <div class="scene">
                <svg width="100%" height="100%" class="floorlines" shape-rendering="crispEdges">
                  <line x1="0" x2="100%" y1="248" y2="248" stroke="#a3a3a3" />
                  <rect x="0" y="262" width="100%" height="7" fill="#4e4e4e" opacity=".8" />
                  <rect x="0" y="269" width="100%" height="7" fill="#565656" opacity=".5" />
                  <line v-for="y in horizon" :key="y" x1="0" x2="100%" :y1="y" :y2="y" stroke="#525252" />
                  <path d="M0 284L243 264M0 298L243 277M0 310L243 283M0 328L243 290M0 356L243 304M0 416L243 337M0 633L168 507L243 451" fill="none" stroke="#525252" />
                </svg>
                <svg class="gizmo" width="44" height="50">
                  <path d="M14.500 37V19" stroke="#2be02b" /><path d="M15 36.500H32" stroke="#c83030" /><path d="M11 22.500H18L11 30.500H18" fill="none" stroke="#3838e0" />
                  <text x="11" y="13" fill="#2be02b">Y</text><text x="37" y="41" fill="#e03a3a">X</text>
                </svg>
                <span class="viewname">透视视图</span>
              </div>
            </section>

            <div class="timeline">
              <i class="grip tall"></i>
              <div class="ruler">
                <svg width="100%" height="22" overflow="visible">
                  <g shape-rendering="crispEdges">
                    <line x1="-7" x2="102%" y1="16" y2="16" stroke="#3c3c3c" />
                    <line v-for="f in [0, 25, 50, 75, 100, 125, 150]" :key="'l' + f" :x1="pct(f)" :x2="pct(f)" y1="1" y2="20" stroke="#686868" />
                    <line v-for="f in frames" :key="f" :x1="pct(f)" :x2="pct(f)" :y1="f % 10 ? 19 : 17" y2="20" stroke="#ababab" />
                    <rect v-for="f in [0, 30, 120, 150]" :key="'k' + f" :x="pct(f)" y="15" width="6" height="4" class="mark" />
                    <rect :x="pct(30)" y="0" width="9" height="16" class="head" />
                  </g>
                  <template v-for="f in frames" :key="'t' + f">
                    <text v-if="f % 10 === 0 && f !== 30" :x="pct(f)" y="10" text-anchor="middle">{{ f }}</text>
                  </template>
                  <text :x="pct(31)" y="10" class="cur">30</text>
                </svg>
              </div>
              <span class="field w66"><input v-model="now" aria-label="当前帧" /><i class="spin"></i></span>
            </div>

            <div class="transport">
              <i class="grip tall"></i>
              <span class="field w66"><input v-model="start" aria-label="起始帧" /><i class="spin"></i></span>
              <div class="range"><button aria-label="左">◀</button><span>0 F</span><span class="r">150 F</span><button aria-label="右">▶</button></div>
              <span class="field w66"><input v-model="end" aria-label="结束帧" /><i class="spin"></i></span>
              <div v-for="(g, i) in playGroups" :key="i" class="group sm">
                <button v-for="t in g.items" :key="t" class="tile" :class="{ on: g.on && g.on.includes(t) }" :aria-label="t"><Icon :n="t" /></button>
              </div>
            </div>

            <div class="bottom">
              <section class="materials">
                <div class="phead line">
                  <i class="grip"></i>
                  <button v-for="m in matMenus" :key="m">{{ m }}</button>
                </div>
              </section>
              <section class="coords">
                <div class="chead"><i class="grip"></i><span>位置</span><span>尺寸</span><span>旋转</span></div>
                <div v-for="(row, r) in coords" :key="r" class="crow">
                  <label v-for="(c, i) in row" :key="i"><span>{{ c[0] }}</span><span class="field"><input v-model="c[1]" /><i class="spin"></i></span></label>
                </div>
                <div class="crow last">
                  <span class="select"><select aria-label="坐标"><option>对象 (相对)</option></select></span>
                  <span class="select"><select aria-label="尺寸"><option>绝对尺寸</option></select></span>
                  <button class="apply">应用</button>
                </div>
              </section>
            </div>
          </div>
        </div>

        <footer class="status"><i class="grip"></i><span>移动：点击并拖动鼠标移动元素。按住 SHIFT 键量化移动；节点编辑模式时按住 SHIFT 键增加选择对象；按住 CTRL 键减少选择对象。</span></footer>
      </div>

      <div class="right">
        <div class="dock objects">
          <section class="panel">
            <div class="phead line">
              <i class="grip"></i>
              <button v-for="m in objMenus" :key="m">{{ m }}</button>
              <div class="icons wide"><Icon n="search" /><Icon n="home" /><Icon n="eye" /><Icon n="plus" /></div>
            </div>
            <div class="tree">
              <div class="names">
                <div class="trow"><Icon n="minus" /><Icon n="poly" s="14" /><span class="dim">立方体</span></div>
                <div class="trow child"><i class="elbow"></i><Icon n="bendS" s="14" /><span>扭曲</span></div>
              </div>
              <div class="flags">
                <div class="trow"><Icon n="layer" /><Icon n="dots" s="14" /></div>
                <div class="trow"><Icon n="layer" /><Icon n="dots" s="14" /><Icon n="check" s="12" /></div>
              </div>
              <div class="tags"><div class="trow"><Icon n="phong" /><Icon n="uvw" /></div></div>
            </div>
          </section>
          <nav class="tabs">
            <button class="active">对象</button><button>场次</button><button>内容浏览器</button><button>构造</button>
          </nav>
        </div>

        <div class="dock attrs">
          <section class="panel">
            <div class="phead line">
              <div class="icons nav"><Icon n="back" /><Icon n="fwd" /><i class="sp"></i><Icon n="up" /><i class="sp"></i><Icon n="search" /><Icon n="unlock" /><Icon n="target" /><Icon n="plus" /></div>
            </div>
            <div class="band"></div>
            <div class="form">
              <span class="select"><select aria-label="插值"><option></option></select></span>
              <hr class="first" />
              <div v-for="c in checks" :key="c.label" class="frow">
                <label class="c4" :for="c.label">{{ c.label }}<span>{{ c.dots }}</span></label><input :id="c.label" type="checkbox" />
              </div>
              <hr class="second" />
              <span class="select"><select aria-label="切线"><option></option></select></span>
              <hr />
              <div class="frow"><label class="c4" for="rt">居右时间<span>{{ dots4 }}</span></label><span class="field"><input id="rt" v-model="rt" /><i class="spin"></i></span></div>
              <div class="frow">
                <label for="lv">居左数值<span>{{ dots4 }}</span></label><span class="field"><input id="lv" v-model="lv" /><i class="spin"></i></span>
                <label class="c4" for="rv">居右数值<span>{{ dots4 }}</span></label><span class="field"><input id="rv" v-model="rv" /><i class="spin"></i></span>
              </div>
              <hr class="full" />
              <div class="frow">
                <label for="la">锁定切线角度</label><input id="la" type="checkbox" />
                <label class="c4" for="ll">锁定切线长度</label><input id="ll" type="checkbox" />
              </div>
              <div class="frow">
                <label for="br">断开切线</label><input id="br" type="checkbox" />
                <label class="c4 off" for="kv">保持视角<span>{{ dots4 }}</span></label><input id="kv" type="checkbox" disabled />
              </div>
            </div>
          </section>
          <nav class="tabs"><button class="active">属性</button><button>层</button></nav>
        </div>
      </div>
    </div>

    <section class="float">
      <header class="ftitle">
        <Icon n="logo" /><h2>时间线窗口</h2>
        <div class="winbtns"><button v-for="b in ['min', 'max', 'close']" :key="b" :aria-label="b"><Icon :n="b" /></button></div>
      </header>
      <nav class="fmenu">
        <i class="grip"></i>
        <button v-for="m in tlMenus" :key="m">{{ m }}</button>
        <div class="icons"><Icon n="search" /><Icon n="home" /><Icon n="eye" /><Icon n="plus" /><Icon n="pan" /><Icon n="dolly" /></div>
      </nav>
      <div class="ftools">
        <i class="grip tall"></i>
        <div v-for="(g, i) in tlGroups" :key="i" class="group sm" :class="g.gap">
          <button v-for="t in g.items" :key="t" class="tile" :class="{ on: g.on && g.on.includes(t) }" :aria-label="t"><Icon :n="t" /></button>
        </div>
      </div>
      <div class="fbody">
        <div class="tracks">
          <div class="thead">函数曲线</div>
          <div class="tlist">
            <div class="tnames">
              <div v-for="t in tracks" :key="t.name" class="track" :class="t.cls">
                <template v-if="t.cls === 'root'"><Icon n="minus" /><Icon n="bendS" s="14" /></template>
                <span>{{ t.name }}</span>
              </div>
            </div>
            <div class="tflags">
              <div v-for="t in tracks" :key="t.name" class="track" :class="t.cls"><Icon n="layer" /><Icon n="solo" /><Icon n="circle" /></div>
            </div>
          </div>
        </div>
        <div class="graph">
          <svg width="100%" height="100%">
            <g shape-rendering="crispEdges">
              <rect x="0" y="0" width="100%" height="1" fill="#2a2a2a" />
              <line v-for="f in gFrames" :key="f" :x1="gx(f) + 0.5" :x2="gx(f) + 0.5" y1="16" y2="100%" stroke="#393939" />
              <line x1="0" x2="100%" y1="17.500" y2="17.500" stroke="#383838" />
              <line x1="0" x2="100%" y1="34.500" y2="34.500" stroke="#383838" />
              <line v-for="v in gValues" :key="'h' + v" x1="0" x2="100%" :y1="gy(v) + 0.5" :y2="gy(v) + 0.5" :stroke="v % 360 ? '#383838' : '#191919'" />
              <line v-for="f in gLabels" :key="'m' + f" :x1="gx(f) + 0.5" :x2="gx(f) + 0.5" y1="16" y2="100%" stroke="#191919" />
              <line x1="0" x2="100%" y1="52.500" y2="52.500" stroke="#5e5e5e" />
            </g>
            <text v-for="f in gLabels" :key="'t' + f" :x="gx(f)" y="14" text-anchor="middle" :class="{ strong: f % 25 === 0 }">{{ f }}</text>
            <text v-for="v in gValues.filter((n) => n % 40 === 0)" :key="'v' + v" x="10" :y="gy(v) + 3" class="val">{{ v }}</text>
            <g fill="none" stroke="#ffa51c" stroke-width="1" shape-rendering="crispEdges">
              <polyline :points="`0,130 ${gx(30)},${gy(360) + 0.5} ${gx(120)},${gy(360) + 0.5} ${gx(120) + 46},143`" />
              <line :x1="gx(30)" :y1="gy(0)" :x2="gx(120)" :y2="gy(360)" />
            </g>
            <g shape-rendering="crispEdges">
              <rect :x="gx(30)" y="0" width="1" height="100%" fill="#58df92" />
              <rect :x="gx(30)" y="2" width="9" height="14" fill="#58df92" />
              <template v-for="(k, i) in keys" :key="i">
                <rect :x="gx(k[0]) - 2" :y="gy(k[1])" width="6" height="4" fill="#111" />
                <rect :x="gx(k[0]) - 2" :y="gy(k[1]) - 2" width="5" height="5" fill="#ffa51c" />
              </template>
            </g>
            <text :x="gx(30) + 11" y="14" class="cur">30</text>
          </svg>
        </div>
      </div>
      <footer class="fstatus">当前帧&nbsp; 30&nbsp; 预览&nbsp; 0--&gt;150</footer>
    </section>

    <div class="ime">
      <span class="lang">英</span>
      <svg width="50" height="50" viewBox="0 0 50 50">
        <circle cx="25" cy="25" r="24" fill="#fff" stroke="#2b8df0" stroke-width="2.500" /><circle cx="25" cy="25" r="21" fill="none" stroke="#333" stroke-width="1.500" />
        <path d="M21 20Q25 18 29 20Q31 25 27 31Q25 33 23 31Q19 25 21 20Z" fill="#0a0a0a" />
        <path d="M22 21Q15 20 14 12M20 20Q17 17 19 13M17 18Q13 18 13 15M28 21Q35 20 36 12M30 20Q33 17 31 13M33 18Q37 18 37 15" fill="none" stroke="#0a0a0a" stroke-width="1.600" />
        <text x="25" y="41" text-anchor="middle" font-size="6" font-weight="900">行鹿客</text>
      </svg>
    </div>
  </div>
</template>

<style>
html, body { background: #474747; }
</style>

<style scoped>
.app { position: relative; height: 100vh; min-height: 900px; display: flex; flex-direction: column; overflow: hidden; background: #474747; color: #b9b9b9; font: 11px/16px "Noto Sans", "Noto Sans CJK SC", sans-serif; border-left: 1px solid #50555a; border-bottom: 1px solid #777; box-sizing: border-box; }
.app *, .app *::before, .app *::after { box-sizing: border-box; }
button, input, select { font: inherit; color: inherit; margin: 0; padding: 0; border: 0; background: none; }
svg { display: block; flex: none; }
h1, h2 { margin: 0; font-weight: 400; }
.titlebar { height: 31px; flex: none; background: #fff; border-top: 1px solid #808080; display: flex; align-items: center; gap: 5px; padding: 0 1px 2px 8px; color: #999; }
.titlebar h1 { font-size: 13px; line-height: 20px; }
.winbtns { margin-left: auto; display: flex; align-self: stretch; }
.winbtns button { width: 46px; display: grid; place-items: center; }
.menubar { height: 29px; flex: none; display: flex; align-items: center; gap: 14px; padding: 0 2px 6px 8px; }
.iface { margin-left: auto; margin-right: -9px; }
.iface-sel { width: 127px; margin-right: -8px; }
.main { flex: 1; display: flex; min-height: 0; }
.left { flex: 1; min-width: 0; display: flex; flex-direction: column; }
.toolbar { height: 38px; flex: none; display: flex; }
.grip { width: 12px; height: 12px; flex: none; background: linear-gradient(135deg, #999 34%, #222 34% 67%, #555 67%) 0 0 / 3px 3px; }
.grip.tall { width: 6px; height: auto; }
.grip.wide { width: 27px; height: 6px; margin: 0 0 3px 5px; }
.toolbar .grip { margin: 5px 2px 5px 0; }
.group { display: flex; gap: 1px; background: #3a3a3a; border-radius: 3px; box-shadow: 0 0 0 1px #2b2b2b; align-self: flex-start; overflow: hidden; }
.toolbar .group { margin-right: 11px; }
.toolbar .group:has(+ .near) { margin-right: 3px; }
.tile { width: 35px; height: 35px; background: linear-gradient(#707070, #646464); display: grid; place-items: center; overflow: hidden; flex: none; }
.tile.on { background: #8ca5cd; }
.group.sm .tile { width: 27px; height: 27px; }
.work { flex: 1; display: flex; min-height: 0; }
.side { width: 39px; flex: none; display: flex; flex-direction: column; padding-left: 1px; }
.group.col { flex-direction: column; margin-bottom: 11px; flex: none; }
.group.col:has(+ .near) { margin-bottom: 2px; }
.brand { margin-top: auto; margin-bottom: 5px; height: 84px; writing-mode: vertical-rl; transform: rotate(180deg); align-self: flex-start; color: #a0a0a0; white-space: nowrap; }
.brand b { display: block; font: italic 900 17px/18px "Open Sans", sans-serif; }
.brand span { display: block; font: 400 15px/16px Lato, sans-serif; }
.center { flex: 1; min-width: 0; display: flex; flex-direction: column; margin-right: 4px; }
.view { flex: 1; min-height: 0; display: flex; flex-direction: column; border: 1px solid #666; border-width: 1px 0 0 1px; }
.phead { height: 24px; flex: none; display: flex; align-items: center; gap: 14px; padding-left: 5px; }
.phead .grip, .fmenu .grip { margin-right: -5px; }
.phead.line { border-bottom: 1px solid #333; box-shadow: 0 1px #666; }
.objects .phead { padding: 0 0 2px 5px; }
.icons { margin-left: auto; display: flex; gap: 1px; padding-right: 2px; }
.icons.wide { gap: 3px; padding-right: 1px; }
.icons.nav { padding-right: 1px; gap: 3px; }
.icons .sp { width: 5px; }
.scene { flex: 1; position: relative; overflow: hidden; border: 1px solid #b0b0b0; background: linear-gradient(#7c7c7c 0, #808080 33px, #868686 33px, #777 262px, #767676 263px, #5c5c5c 615px, #525252 615px, #555 100%); }
.floorlines { position: absolute; inset: 0; }
.viewname { position: absolute; left: 2px; top: 2px; padding: 0 2px; background: #646464; border-radius: 3px; color: #ddd; }
.gizmo { position: absolute; left: 22px; bottom: 25px; overflow: visible; font-size: 11px; }
.timeline { display: flex; height: 22px; margin-top: 5px; flex: none; }
.timeline .grip, .transport > .grip { margin: 2px 3px 2px 0; }
.ruler { flex: 1; min-width: 0; background: #333; border: 1px solid #292929; border-right-color: #555; overflow: hidden; padding: 0 6px; border-radius: 2px; margin-right: 6px; }
.ruler text { fill: #b5b5b5; font-size: 11px; }
.ruler .cur, .graph .cur { fill: #58df92; }
.mark { fill: #4a5a6a; stroke: #8fb2d6; transform: translateX(-3px); }
.head { fill: #58df92; transform: translateX(-5px); }
.field { display: flex; align-items: center; height: 20px; background: #303030; border: 1px solid #292929; border-right-color: #666; border-bottom-color: #666; border-radius: 2px; min-width: 0; }
.field input { flex: 1; width: 0; min-width: 0; padding: 0 0 1px 4px; outline: 0; height: 18px; }
.w66 { width: 66px; flex: none; }
.spin { width: 5px; height: 10px; margin-right: 2px; flex: none; background: #8a8a8a; clip-path: polygon(50% 0, 100% 40%, 0 40%, 0 60%, 100% 60%, 50% 100%, 0 60%, 0 40%); }
.transport { display: flex; height: 27px; margin-top: 4px; flex: none; align-items: center; }
.transport > .grip { height: 20px; }
.range { flex: 1; margin: 0 6px; height: 20px; border: 1px solid #2b2b2b; border-radius: 4px; background: linear-gradient(#7d7d7d, #626262); display: flex; align-items: center; color: #333; padding: 0 5px 1px; gap: 2px; }
.range button { color: #ddd; font-size: 9px; width: 10px; }
.range .r { margin-left: auto; }
.transport .group { margin-left: 11px; flex: none; }
.bottom { height: 120px; margin-top: 4px; flex: none; display: flex; gap: 3px; }
.materials { flex: 1; border: 1px solid #666; border-right-color: #333; border-bottom-color: #333; }
.coords { width: 300px; flex: none; border: 1px solid #666; border-right-color: #333; border-bottom-color: #333; padding: 0 4px 0 3px; }
.chead { height: 21px; display: grid; grid-template-columns: 20px 93px 93px 1fr; align-items: center; border-bottom: 1px solid #666; margin-bottom: 4px; }
.chead .grip { margin-left: 1px; }
.crow { display: grid; grid-template-columns: 95px 98px 1fr; margin-bottom: 3px; }
.crow label { display: flex; align-items: center; }
.crow label > span:first-child { width: 11px; flex: none; }
.crow .field { flex: 1; }
.crow label:nth-child(2) { padding-left: 3px; }
.crow label:nth-child(3) { padding-left: 4px; }
.crow.last { grid-template-columns: 84px 84px 83px; gap: 14px; padding-left: 11px; margin-top: 5px; }
.select { position: relative; display: block; }
.select select { width: 100%; height: 19px; appearance: none; background: linear-gradient(#777, #636363); border: 1px solid #303030; border-radius: 4px; padding: 0 6px 1px; color: #c9c9c9; display: block; }
.select::after { content: ""; position: absolute; right: 4px; top: 8px; border: 4px solid transparent; border-top-color: #d5d5d5; border-bottom: 0; }
.apply { height: 19px; border: 1px solid #303030; border-radius: 9px; background: linear-gradient(#777, #606060); color: #c9c9c9; }
.status { height: 21px; flex: none; margin: 2px 4px 0 0; border: 1px solid #666; border-right-color: #333; border-bottom: 0; display: flex; align-items: center; gap: 10px; padding-left: 4px; white-space: nowrap; overflow: hidden; }
.right { width: 552px; flex: none; display: flex; flex-direction: column; gap: 4px; }
.dock { display: flex; min-height: 0; }
.objects { flex: 442 1 0; }
.attrs { flex: 470 1 0; }
.panel { flex: 1; min-width: 0; display: flex; flex-direction: column; border: 1px solid #666; border-right-color: #333; border-bottom-color: #333; }
.tree { flex: 1; display: grid; grid-template-columns: 74px 39px 1fr; margin: 1px 2px 0 0; border-right: 1px solid #666; }
.names, .flags { border-right: 1px solid #2e2e2e; }
.flags { border-right: 2px solid #5e5e5e; }
.trow { height: 20px; display: flex; align-items: center; background: #4f4f4f; white-space: nowrap; }
.trow:nth-child(2) { background: #4b4b4b; }
.names .trow { color: #ffb325; gap: 1px; }
.names .trow .dim { color: #b57410; }
.names .trow span { margin-left: 4px; }
.elbow { width: 8px; height: 11px; border: 1px solid #999; border-width: 0 0 1px 1px; margin: -10px 1px 0 17px; }
.flags .trow { padding-left: 1px; }
.flags svg:nth-child(2) { margin-left: -1px; }
.flags svg:nth-child(3) { margin-left: -3px; }
.tags .trow { padding-left: 2px; gap: 4px; }
.tabs { width: 24px; flex: none; display: flex; flex-direction: column; align-items: flex-start; gap: 1px; }
.tabs button { width: 22px; padding: 6px 0 6px 4px; writing-mode: vertical-rl; text-orientation: sideways; line-height: 18px; background: #343434; color: #707070; border-radius: 0 4px 4px 0; min-height: 20px; }
.tabs button.active { background: linear-gradient(#6e6e6e, #5d5d5d); color: #ffac1f; }
.band { margin: 32px 3px 5px 0; height: 18px; background: #333; flex: none; }
.form { width: 316px; }
.form hr { margin: 4px 0 3px 92px; border: 0; height: 2px; background: #666; border-top: 1px solid #333; }
.form hr.second { margin: 22px 0 5px 0; }
.form hr.full { margin: 3px 0 4px 2px; }
.form > .select { margin-left: 92px; }
.frow { display: grid; grid-template-columns: 72px 66px 21px 71px 66px; padding-left: 20px; min-height: 20px; margin-bottom: 3px; align-items: center; }
.frow label { display: flex; white-space: nowrap; }
.frow label span { margin-left: auto; padding-right: 3px; }
.frow .c4 { grid-column: 4; }
.frow .off { color: #808080; }
.full ~ .frow { margin-bottom: 1px; }
input[type="checkbox"] { appearance: none; width: 12px; height: 12px; border-radius: 3px; background: linear-gradient(135deg, #7a7a7a, #5c5c5c); box-shadow: 0 0 0 1px #353535; }
input[type="checkbox"]:disabled { opacity: .6; }
.float { position: absolute; left: 283px; top: 181px; right: 381px; bottom: 213px; display: flex; flex-direction: column; border: 1px solid #1883d7; background: #474747; box-shadow: 0 5px 18px rgba(0, 0, 0, .45); }
.ftitle { height: 30px; flex: none; background: #fff; color: #000; display: flex; align-items: center; padding-left: 8px; gap: 5px; }
.ftitle h2 { font-size: 12px; }
.fmenu { height: 24px; flex: none; background: #696969; display: flex; align-items: center; gap: 14px; padding-left: 5px; border-bottom: 1px solid #303030; color: #a9a9a9; }
.fmenu .icons { gap: 2px; padding-right: 1px; }
.ftools { height: 32px; flex: none; display: flex; border-top: 1px solid #666; border-bottom: 1px solid #666; padding-top: 1px; }
.ftools .grip { margin: 2px 3px 3px 0; }
.ftools .group { margin-right: 11px; }
.ftools .group:has(+ .far) { margin-right: 21px; }
.ftools .group:has(+ .near) { margin-right: 3px; }
.ftools .group.sm .tile { height: 26px; }
.fbody { flex: 1; min-height: 0; display: flex; }
.tracks { width: 145px; flex: none; background: #585858; border-right: 1px solid #666; box-shadow: inset -1px 0 #2e2e2e; display: flex; flex-direction: column; }
.thead { height: 52px; flex: none; padding: 17px 0 0 10px; color: #e0e0e0; border-bottom: 1px solid #333; }
.tlist { flex: 1; display: flex; }
.tnames { width: 91px; border-right: 1px solid #333; }
.tflags { flex: 1; border-left: 1px solid #666; margin-right: 1px; }
.track { height: 18px; display: flex; align-items: center; color: #ffa51c; background: #505050; white-space: nowrap; }
.track.sub { background: #434343; }
.tnames .root svg + svg { margin: 0 2px 0 1px; }
.tnames .sub { padding-left: 37px; }
.tnames .leaf { padding-left: 26px; }
.tflags .track { padding-left: 1px; }
.tflags svg + svg { margin-left: -2px; }
.graph { flex: 1; min-width: 0; overflow: hidden; margin-right: 2px; }
.graph text { fill: #a8a8a8; font-size: 11px; }
.graph .strong { font-weight: 600; fill: #dcdcdc; }
.graph .val { fill: #d0d0d0; }
.graph .cur { fill: #58df92; }
.fstatus { height: 19px; flex: none; border-top: 1px solid #666; padding: 2px 0 0 7px; line-height: 16px; }
.ime { position: absolute; left: 1125px; top: 815px; width: 81px; height: 50px; }
.ime svg { position: absolute; left: 0; top: 0; }
.lang { position: absolute; left: 20px; right: 0; bottom: 0; height: 28px; background: #fff; border: 1px solid #2b8df0; border-radius: 14px; color: #1c83f2; font: 700 12px/28px "Noto Sans CJK SC", sans-serif; padding-left: 36px; }
</style>
